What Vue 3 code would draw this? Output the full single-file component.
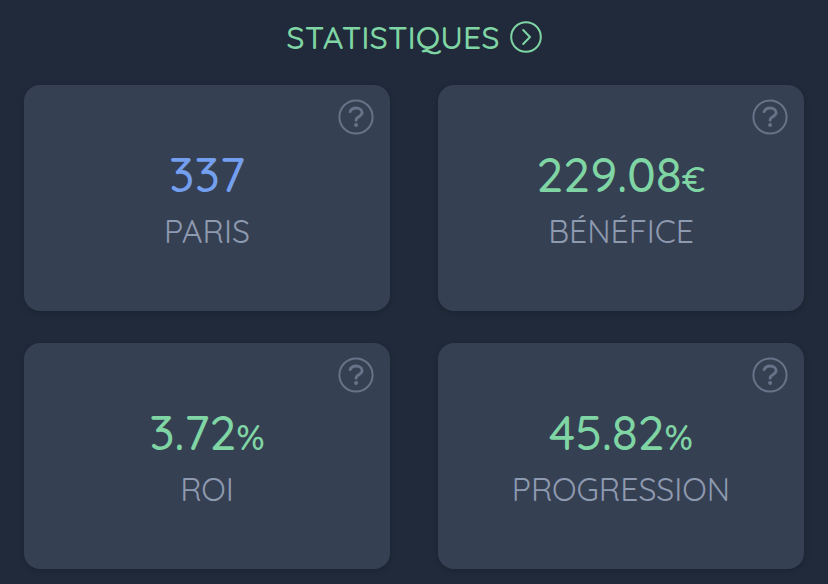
<template>
  <main class="stats">
    <h1 class="title">
      <a href="#" class="title-link">
        Statistiques
        <svg class="icon-more" viewBox="0 0 32 32" aria-hidden="true">
          <circle cx="16" cy="16" r="14.8" />
          <path d="M13.2 9 L20 16 L13.2 23" />
        </svg>
      </a>
    </h1>
    <section class="grid">
      <article v-for="stat in stats" :key="stat.label" class="card">
        <button type="button" class="help" :aria-label="'Aide ' + stat.label">
          <svg viewBox="0 0 36 36" aria-hidden="true">
            <circle cx="18" cy="18" r="16.6" />
            <path
              class="hook"
              d="M12.2 12.6 C13.2 9.8 15.4 9 18 9 C21.6 9 24.1 10.9 24.1 13.7 C24.1 17.6 18.1 17.2 18.1 21.2"
            />
            <circle class="dot" cx="18.1" cy="25.9" r="2" />
          </svg>
        </button>
        <p class="value" :class="stat.color">
          {{ stat.value }}<span v-if="stat.unit" class="unit">{{ stat.unit }}</span>
        </p>
        <h2 class="label">{{ stat.label }}</h2>
      </article>
    </section>
  </main>
</template>

<script setup>
const stats = [
  { label: "Paris", value: "337", unit: "", color: "blue" },
  { label: "Bénéfice", value: "229.08", unit: "€", color: "green" },
  { label: "ROI", value: "3.72", unit: "%", color: "green" },
  { label: "Progression", value: "45.82", unit: "%", color: "green" },
];
</script>

<style>
body {
  background: #202a3a;
}
</style>

<style scoped>
.stats {
  padding: 13px 24px 15px;
  font-family: Quicksand, Lato, sans-serif;
}

.title {
  margin: 0 0 24px;
  font-size: 32px;
  line-height: 48px;
  font-weight: 500;
  text-transform: uppercase;
}

.title-link {
  display: flex;
  align-items: center;
  justify-content: center;
  gap: 10px;
  color: #7fd5a3;
  text-decoration: none;
}

.icon-more {
  width: 32px;
  height: 32px;
  fill: none;
  stroke: currentColor;
  stroke-width: 2;
  stroke-linecap: round;
  stroke-linejoin: round;
}

.grid {
  display: grid;
  grid-template-columns: 1fr 1fr;
  gap: 32px 48px;
}

.card {
  position: relative;
  padding: 64px 16px 60px;
  border-radius: 16px;
  background: #364053;
  box-shadow: 0 2px 6px rgba(0, 0, 0, 0.16);
  text-align: center;
}

.help {
  position: absolute;
  top: 14px;
  right: 16px;
  width: 36px;
  height: 36px;
  padding: 0;
  border: 0;
  background: none;
  color: #687389;
  cursor: pointer;
}

.help svg {
  display: block;
  fill: none;
  stroke: currentColor;
  stroke-width: 2;
  stroke-linecap: round;
}

.help .hook {
  stroke-width: 2.9;
}

.help .dot {
  fill: currentColor;
  stroke: none;
}

.value {
  margin: 0;
  font-size: 48px;
  line-height: 50px;
  font-weight: 500;
  font-kerning: none;
}

.unit {
  font-size: 36px;
  line-height: 1;
}

.blue {
  color: #739fee;
}

.green {
  color: #7fd5a3;
}

.label {
  margin: 0;
  padding-top: 12px;
  font-size: 32px;
  line-height: 40px;
  font-weight: 400;
  color: #8e9ab0;
  text-transform: uppercase;
}
</style>
